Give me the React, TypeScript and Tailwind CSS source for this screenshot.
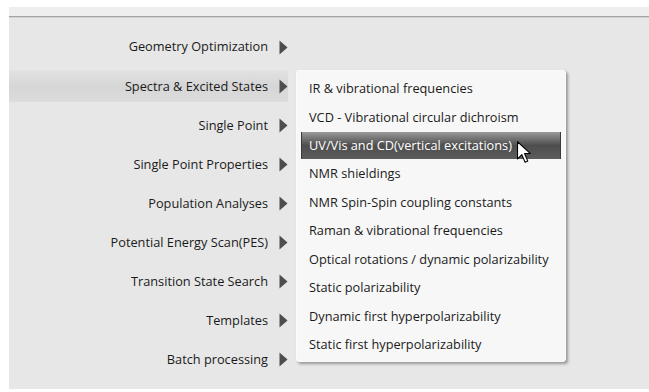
import React from 'react';

const leftItems = [
  'Geometry Optimization',
  'Spectra & Excited States',
  'Single Point',
  'Single Point Properties',
  'Population Analyses',
  'Potential Energy Scan(PES)',
  'Transition State Search',
  'Templates',
  'Batch processing',
];

const subItems = [
  'IR & vibrational frequencies',
  'VCD - Vibrational circular dichroism',
  'UV/Vis and CD(vertical excitations)',
  'NMR shieldings',
  'NMR Spin-Spin coupling constants',
  'Raman & vibrational frequencies',
  'Optical rotations / dynamic polarizability',
  'Static polarizability',
  'Dynamic first hyperpolarizability',
  'Static first hyperpolarizability',
];

const Arrow = () => (
  <svg width="9" height="15" viewBox="0 0 9 15" className="shrink-0">
    <path d="M0.5 0.5 L8.5 7.5 L0.5 14.5 Z" fill="#4d4d4d" />
  </svg>
);

const Cursor = () => (
  <svg width="14" height="23" viewBox="0 0 13 21" className="absolute left-[216px] top-[10px]">
    <path
      d="M0.5 0.5 L0.5 16.5 L4.5 12.5 L7.5 19.5 L10 18.5 L7 11.5 L12.5 11.5 Z"
      fill="#ffffff"
      stroke="#000000"
      strokeWidth="1"
      strokeLinejoin="round"
    />
  </svg>
);

const App = () => {
  return (
    <div className="w-[649px] h-[392px] bg-white relative overflow-hidden font-['Open_Sans',sans-serif] text-[12.75px] text-[#1a1a1a]">
      <div className="ml-[9px] mt-[7px] h-[9px] bg-[#eeeeee]" />
      <div className="ml-[9px] h-[1px] bg-[#a3a3a3]" />
      <div className="ml-[9px] h-[1px] bg-[#d2d2d2]" />
      <div className="ml-[9px] h-[371px] bg-[#e7e7e7] pt-[13px] flex flex-col gap-[7.1px]">
        {leftItems.map((item, i) => (
          <div
            key={item}
            className={
              'h-[32px] w-[279px] flex items-center justify-end gap-[11px] ' +
              (i === 1 ? 'bg-gradient-to-b from-[#e2e2e2] via-[#d6d6d6] to-[#dcdcdc]' : '')
            }
          >
            <span>{item}</span>
            <Arrow />
          </div>
        ))}
      </div>

      <div className="absolute left-[296px] top-[70px] w-[270px] h-[292px] bg-[#f7f7f7] rounded-[3px] border border-[#fbfbfb] shadow-[2px_2px_3px_rgba(0,0,0,0.35)] pt-[3.5px] px-[4px]">
        {subItems.map((item, i) => (
          <div key={item} className="h-[28.45px] flex items-center relative">
            {i === 2 ? (
              <div className="h-[27px] w-full flex items-center px-[8px] text-white bg-gradient-to-b from-[#9a9a9a] via-[#4e4e4e] to-[#5c5c5c] shadow-[inset_1px_0_0_#3a3a3a,inset_-1px_0_0_#3a3a3a]">
                {item}
                <Cursor />
              </div>
            ) : (
              <span className="px-[8px]">{item}</span>
            )}
          </div>
        ))}
      </div>
    </div>
  );
};

export default App;
